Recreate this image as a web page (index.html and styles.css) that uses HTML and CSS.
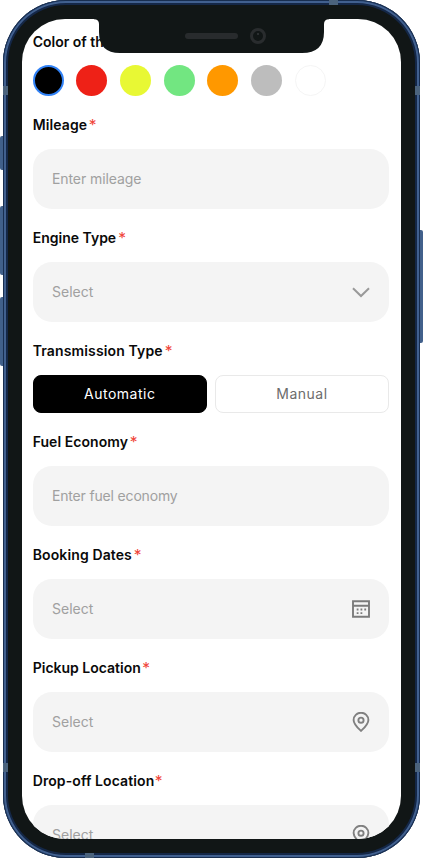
FILE: index.html
```html
<!DOCTYPE html>
<html lang="en">
<head>
<meta charset="utf-8">
<meta name="viewport" content="width=device-width, initial-scale=1">
<title>Vehicle details</title>
<link rel="stylesheet" href="styles.css">
</head>
<body>
<div class="device">
  <span class="key key-mute"></span>
  <span class="key key-up"></span>
  <span class="key key-down"></span>
  <span class="key key-power"></span>
  <div class="frame">
    <main class="screen">
      <h2 class="label">Color of the Car</h2>
      <div class="swatches">
        <span class="swatch black"></span>
        <span class="swatch red"></span>
        <span class="swatch yellow"></span>
        <span class="swatch green"></span>
        <span class="swatch orange"></span>
        <span class="swatch gray"></span>
        <span class="swatch white"></span>
      </div>

      <h2 class="label"><span class="t-mileage">Mileage</span><span class="star">*</span></h2>
      <div class="field"><span class="hint-mileage">Enter mileage</span></div>

      <h2 class="label"><span class="t-engine">Engine Type</span><span class="star wide">*</span></h2>
      <div class="field"><span class="select">Select</span>
        <svg class="icon" viewBox="0 0 20 20"><path d="M2 6.2L10 14L18 6.2" stroke="#999" stroke-width="2"/></svg>
      </div>

      <h2 class="label"><span class="t-transmission">Transmission Type</span><span class="star wide">*</span></h2>
      <div class="options">
        <button class="option active">Automatic</button>
        <button class="option">Manual</button>
      </div>

      <h2 class="label"><span class="t-fuel">Fuel Economy</span><span class="star">*</span></h2>
      <div class="field"><span class="hint-fuel">Enter fuel economy</span></div>

      <h2 class="label"><span class="t-booking">Booking Dates</span><span class="star wide">*</span></h2>
      <div class="field"><span class="select">Select</span>
        <svg class="icon" viewBox="0 0 20 20"><path d="M2 2.2H18V17.8H2ZM2 6.7H18" stroke="#7b7b7b" stroke-width="1.9"/><path d="M5.7 10.5H7.5M9.5 10.5H11.3M13.3 10.5H15.1M5.7 14.2H7.5M9.5 14.2H11.3" stroke="#7b7b7b" stroke-width="1.8"/></svg>
      </div>

      <h2 class="label"><span class="t-pickup">Pickup Location</span><span class="star">*</span></h2>
      <div class="field"><span class="select">Select</span>
        <svg class="icon" viewBox="0 0 20 20"><path d="M10 18.9C7 16 2.6 12.2 2.6 7.9A7.4 7.2 0 0 1 17.4 7.9C17.4 12.2 13 16 10 18.9Z" stroke="#808080" stroke-width="1.9"/><circle cx="10" cy="8.2" r="2.6" stroke="#808080" stroke-width="1.9"/></svg>
      </div>

      <h2 class="label"><span class="t-dropoff">Drop-off Location</span><span class="star">*</span></h2>
      <div class="field"><span class="select">Select</span>
        <svg class="icon" viewBox="0 0 20 20"><path d="M10 18.9C7 16 2.6 12.2 2.6 7.9A7.4 7.2 0 0 1 17.4 7.9C17.4 12.2 13 16 10 18.9Z" stroke="#808080" stroke-width="1.9"/><circle cx="10" cy="8.2" r="2.6" stroke="#808080" stroke-width="1.9"/></svg>
      </div>
    </main>
  </div>
  <svg class="notch" viewBox="0 0 225 34"><path d="M-5 0H230V.3Q225 .3 225 5V13Q225 34 203 34H21Q0 34 0 13V5Q0 .3 -5 .3Z" fill="#111616"/><rect x="86" y="14" width="53" height="6" rx="3" fill="#282b2d"/><circle cx="159" cy="17" r="6.500" fill="none" stroke="#292c2e" stroke-width="3"/><circle cx="159" cy="15" r="1" fill="#35393b"/></svg>
  <span class="band side left upper"></span>
  <span class="band side right upper"></span>
  <span class="band side left lower"></span>
  <span class="band side right lower"></span>
  <span class="band top"></span>
  <span class="band bottom"></span>
</div>
</body>
</html>
```
FILE: styles.css
```css
* { box-sizing: border-box; }

body {
  margin: 0;
  background: #fff;
  font-family: Inter, "Liberation Sans", sans-serif;
  overflow: hidden;
}

.device {
  position: relative;
  width: 423px;
  height: 858px;
  padding: 0 3px;
}

.frame {
  height: 858px;
  padding: 19px;
  border-radius: 63px;
  background: #111616;
  box-shadow: inset 0 0 0 1px #182e50, inset 0 0 0 3px #41608f, inset 0 0 0 5px #142747;
}

.screen {
  height: 820px;
  padding: 12.800px 12px 0 10.700px;
  border-radius: 43px;
  background: #fff;
  overflow: hidden;
}

.label {
  display: flex;
  align-items: center;
  height: 20px;
  margin: 18.800px 0 14px;
  font-size: 14px;
  font-weight: 600;
  line-height: 20px;
  color: #0a0a0a;
  white-space: nowrap;
}

.label:first-child { margin: 0 0 13.700px; }

.star {
  height: 20px;
  margin-left: 1.5px;
  font-size: 15.5px;
  font-weight: 400;
  line-height: 22px;
  color: #f04438;
}

.star.wide { margin-left: 2.5px; }

.t-mileage { width: 54.500px; letter-spacing: 0.1px; }
.t-engine { width: 83px; }
.t-transmission { width: 129.500px; letter-spacing: 0.14px; }
.t-fuel { width: 95.500px; letter-spacing: 0.05px; }
.t-booking { width: 98.500px; letter-spacing: 0.12px; }
.t-pickup { width: 108px; }
.t-dropoff { width: 120.500px; letter-spacing: 0.1px; }

.hint-mileage { letter-spacing: -0.08px; }
.hint-fuel { letter-spacing: -0.17px; }

.swatches { display: flex; gap: 12.700px; }
.swatch { width: 31px; height: 31px; border-radius: 50%; }
.black { background: #000; border: 2px solid #3182f6; }
.red { background: #ee2117; }
.yellow { background: #e8f834; }
.green { background: #72e681; }
.orange { background: #ff9800; }
.gray { background: #bdbdbd; }
.white { border: 1px solid #f5f5f5; }

.field {
  display: flex;
  align-items: center;
  justify-content: space-between;
  height: 60px;
  padding: 0 18.500px 0 19.300px;
  border-radius: 19px;
  background: #f4f4f4;
  font-size: 14px;
  line-height: 20px;
  color: #a0a0a0;
}

.icon { width: 20px; height: 20px; fill: none; }

.options { display: flex; gap: 8px; }

.option {
  flex: 1;
  height: 38.600px;
  padding: 0;
  border: 1px solid #e9e9e9;
  border-radius: 8px;
  background: #fff;
  color: #6c6c6c;
  font: 400 14px/20px Inter, "Liberation Sans", sans-serif;
  letter-spacing: 0.5px;
}

.option.active { background: #000; border-color: #000; color: #fff; }

/* Hardware details lie over the frame. */
.notch { position: absolute; left: 99px; top: 18.500px; width: 225px; height: 34px; overflow: visible; }

.key { position: absolute; left: 0; width: 3px; background: #41608b; border-radius: 2px 0 0 2px; }
.key-mute { top: 136px; height: 34px; }
.key-up { top: 206px; height: 69px; }
.key-down { top: 297px; height: 69px; }
.key-power { left: 420px; top: 230px; height: 113px; border-radius: 0 2px 2px 0; }

.band { position: absolute; background: #4b637d; }
.side { width: 5px; height: 9px; }
.left { left: 3px; }
.right { left: 415px; }
.upper { top: 86px; }
.lower { top: 763px; }
.top { left: 329px; top: 0; width: 9px; height: 5px; }
.bottom { left: 85px; top: 853px; width: 9px; height: 5px; }
```
